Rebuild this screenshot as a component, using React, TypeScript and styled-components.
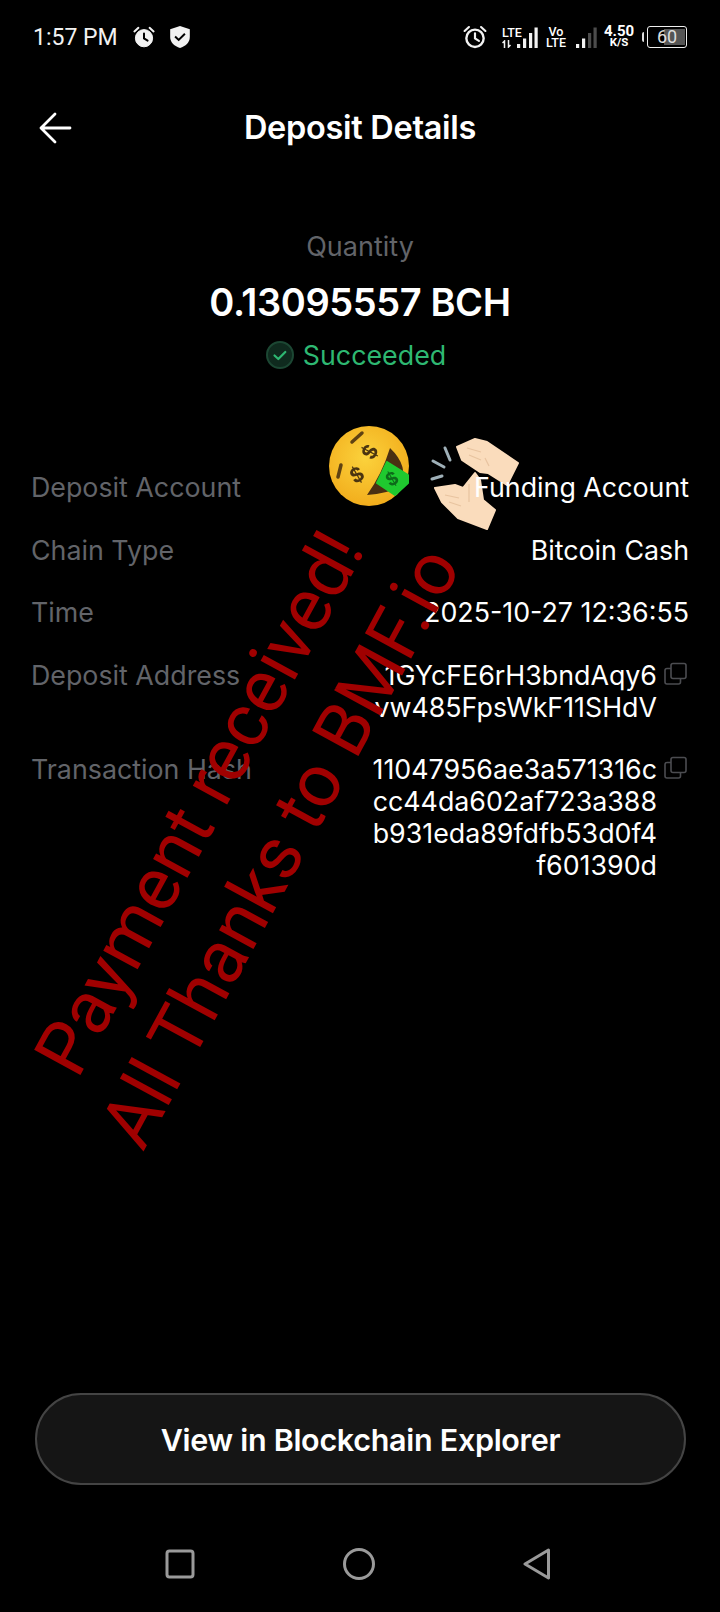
import React, { FC } from 'react'
import styled, { createGlobalStyle } from 'styled-components'

type DetailRow = {
  label: string,
  lines: string[],
  copyable?: boolean
}

const rows: DetailRow[] = [
  { label: 'Deposit Account', lines: ['Funding Account'] },
  { label: 'Chain Type', lines: ['Bitcoin Cash'] },
  { label: 'Time', lines: ['2025-10-27 12:36:55'] },
  { label: 'Deposit Address', lines: ['1GYcFE6rH3bndAqy6', 'vw485FpsWkF11SHdV'], copyable: true },
  { label: 'Transaction Hash', lines: ['11047956ae3a571316c', 'cc44da602af723a388', 'b931eda89fdfb53d0f4', 'f601390d'], copyable: true }
]

const GlobalStyle = createGlobalStyle`
  html, body {
    margin: 0;
    padding: 0;
    background: #000;
  }
`

const Screen = styled.div`
  position: relative;
  display: flex;
  flex-direction: column;
  width: 720px;
  height: 1612px;
  overflow: hidden;
  background: #000;
  color: #fff;
  font-family: Inter, "Liberation Sans", sans-serif;
`

const StatusBar = styled.div`
  display: flex;
  align-items: center;
  justify-content: space-between;
  height: 24px;
  padding: 25px 33px 0 33px;
  font-family: Roboto, sans-serif;
`

const StatusGroup = styled.div`
  display: flex;
  align-items: center;
`

const Clock = styled.span`
  font-size: 23px;
  margin-right: 14px;
  color: #f2f2f2;
`

const ShieldIcon = styled.svg`
  margin-left: 12px;
`

const LteStack = styled.div`
  display: flex;
  flex-direction: column;
  width: 20px;
  margin-left: 14px;
  font-size: 12.5px;
  font-weight: 500;
  line-height: 12px;
`

const VoStack = styled.div`
  display: flex;
  flex-direction: column;
  align-items: center;
  width: 20px;
  margin: 0 10px 0 8px;
  font-size: 12.5px;
  font-weight: 500;
  line-height: 11px;
`

const NetSpeed = styled.div`
  display: flex;
  flex-direction: column;
  align-items: center;
  width: 28px;
  margin: 0 9px 0 8px;
  line-height: 11px;
  font-weight: 700;
`

const SpeedValue = styled.span`
  font-size: 15px;
`

const SpeedUnit = styled.span`
  font-size: 11.5px;
`

const LteArrows = styled.svg`
  margin-top: 1px;
`

const LteBars = styled.svg`
  margin-left: -5px;
`

const Battery = styled.div`
  position: relative;
  box-sizing: border-box;
  width: 40px;
  height: 22px;
  margin-left: 3px;
  border: 1.5px solid #eee;
  border-radius: 3px;
  overflow: hidden;
  text-align: center;
  font-size: 18px;
  line-height: 19px;
  color: #ddd;
`

const BatteryLevel = styled.div`
  position: absolute;
  top: 2px;
  bottom: 2px;
  right: 1px;
  width: 21px;
  background: #555;
`

const BatteryText = styled.span`
  position: relative;
`

const BatteryCap = styled.div`
  width: 2px;
  height: 10px;
  background: #ddd;
  border-radius: 2px 0 0 2px;
`

const Header = styled.header`
  position: relative;
  display: flex;
  align-items: center;
  justify-content: center;
  height: 40px;
  margin-top: 58px;
`

const BackButton = styled.svg`
  position: absolute;
  left: 38px;
  top: 4px;
`

const Title = styled.h1`
  margin: 0;
  font-size: 32.5px;
  font-weight: 600;
  letter-spacing: -0.3px;
`

const Summary = styled.section`
  display: flex;
  flex-direction: column;
  align-items: center;
  margin-top: 85px;
`

const QuantityLabel = styled.div`
  font-size: 27px;
  line-height: 30px;
  color: #626469;
`

const Amount = styled.div`
  margin-top: 18px;
  font-size: 38px;
  line-height: 44px;
  font-weight: 600;
  letter-spacing: -0.4px;
`

const Status = styled.div`
  display: flex;
  align-items: center;
  gap: 9px;
  margin-top: 16px;
  padding-right: 8px;
  font-size: 26.8px;
  line-height: 30px;
  color: #2eb872;
`

const Details = styled.section`
  display: flex;
  flex-direction: column;
  gap: 30.6px;
  margin-top: 101px;
  padding: 0 31px;
`

const Row = styled.div`
  position: relative;
  z-index: 1;
  display: flex;
  justify-content: space-between;
`

const RowLabel = styled.div`
  font-size: 26.8px;
  line-height: 32px;
  color: #626469;
`

const RowValue = styled.div`
  display: flex;
  align-items: flex-start;
  gap: 7px;
`

const ValueLines = styled.div`
  text-align: right;
  font-size: 26.8px;
  line-height: 32px;
  color: #fff;
`

const CopyIcon = styled.svg`
  margin-top: 3px;
  margin-right: 2px;
  flex: none;
`

const Emoji = styled.svg`
  position: absolute;
  z-index: 0;
  filter: blur(0.5px);
`

const MoneyFace = styled(Emoji)`
  left: 327px;
  top: 424px;
`

const ClapHands = styled(Emoji)`
  left: 425px;
  top: 430px;
`

const Watermark = styled.div`
  position: absolute;
  z-index: 2;
  left: 240px;
  top: 825px;
  width: 900px;
  margin-left: -450px;
  margin-top: -92px;
  transform: rotate(-61.5deg);
  text-align: center;
  font-family: Roboto, "Liberation Sans", sans-serif;
  font-weight: 400;
  font-size: 74px;
  line-height: 92px;
  color: #a00000;
  pointer-events: none;
`

const Spacer = styled.div`
  flex: 1;
`

const ExplorerButton = styled.button`
  display: block;
  width: 651px;
  height: 92px;
  margin: 0 0 0 35px;
  background: #151515;
  border: 2px solid #444;
  border-radius: 46px;
  color: #fff;
  font-family: Inter, sans-serif;
  font-size: 30.5px;
  font-weight: 600;
  letter-spacing: -0.3px;
`

const NavBar = styled.nav`
  display: flex;
  align-items: center;
  justify-content: space-between;
  height: 34px;
  padding: 0 169px 0 165px;
  margin: 62px 0 31px;
`

const AlarmGlyph: FC<{ size: number, solid?: boolean }> = ({ size, solid }) => (
  <svg width={size} height={size} viewBox="0 0 24 24" fill="none">
    <circle cx="12" cy="13.2" r={solid ? 8.6 : 8} fill={solid ? '#f2f2f2' : 'none'} stroke="#f2f2f2" strokeWidth={solid ? 1 : 2.2} />
    <path d="M12 8.5V13.4L15.6 15.6" stroke={solid ? '#000' : '#f2f2f2'} strokeWidth="2" strokeLinecap="round" />
    <path d="M2.4 6.4L6.4 2.8M21.600 6.4L17.600 2.8" stroke="#f2f2f2" strokeWidth="2" strokeLinecap="round" />
  </svg>
)

const barPositions = [0, 6, 12, 17.5]

const SignalRects: FC<{ active: number }> = ({ active }) => (
  <>
    {barPositions.map((x, i) => (
      <rect key={x} x={x} y={17 - i * 5.5} width="3.2" height={4 + i * 5.5} fill={i < active ? '#f2f2f2' : '#4c4c4c'} />
    ))}
  </>
)

const CopyGlyph: FC = () => (
  <CopyIcon width="23" height="23" viewBox="0 0 23 23" fill="none" stroke="#4b4c50" strokeWidth="1.6">
    <rect x="7" y="1.5" width="15" height="15" rx="2" />
    <path d="M7 6.500H3a2 2 0 0 0-2 2V20a2 2 0 0 0 2 2h11.500a2 2 0 0 0 2-2v-3.500" />
  </CopyIcon>
)

const App: FC = () => {
  return (
    <Screen>
      <GlobalStyle />
      <StatusBar>
        <StatusGroup>
          <Clock>1:57 PM</Clock>
          <AlarmGlyph size={24} solid />
          <ShieldIcon width="24" height="24" viewBox="0 0 22 22">
            <path d="M11 1l9 3v7c0 5-4 8.500-9 10-5-1.500-9-5-9-10V4z" fill="#f2f2f2" />
            <path d="M6.500 10.500l3.300 3.200 5.700-5.700" fill="none" stroke="#000" strokeWidth="1.800" />
          </ShieldIcon>
        </StatusGroup>
        <StatusGroup>
          <AlarmGlyph size={26} />
          <LteStack>
            <span>LTE</span>
            <LteArrows width="10" height="8" viewBox="0 0 10 8" fill="none" stroke="#f2f2f2" strokeWidth="1.5">
              <path d="M2.500 8V1L0.500 3M6.500 0V7L8.500 5" />
            </LteArrows>
          </LteStack>
          <LteBars width="21" height="21" viewBox="0 0 21 21">
            <SignalRects active={4} />
          </LteBars>
          <VoStack>
            <span>Vo</span>
            <span>LTE</span>
          </VoStack>
          <svg width="21" height="21" viewBox="0 0 21 21">
            <SignalRects active={2} />
          </svg>
          <NetSpeed>
            <SpeedValue>4.50</SpeedValue>
            <SpeedUnit>K/S</SpeedUnit>
          </NetSpeed>
          <BatteryCap />
          <Battery>
            <BatteryLevel />
            <BatteryText>60</BatteryText>
          </Battery>
        </StatusGroup>
      </StatusBar>

      <Header>
        <BackButton width="34" height="34" viewBox="0 0 34 34" fill="none" stroke="#fff" strokeWidth="2.800" strokeLinecap="round" strokeLinejoin="round">
          <path d="M3 17H32M17 3L3 17l14 14" />
        </BackButton>
        <Title>Deposit Details</Title>
      </Header>

      <Summary>
        <QuantityLabel>Quantity</QuantityLabel>
        <Amount>0.13095557 BCH</Amount>
        <Status>
          <svg width="28" height="28" viewBox="0 0 28 28" fill="none">
            <circle cx="14" cy="14" r="13" fill="#0f2a1e" stroke="#1c4733" strokeWidth="2" />
            <path d="M8.500 14.500l3.800 3.500 7-7" stroke="#2eb872" strokeWidth="2.200" strokeLinecap="round" strokeLinejoin="round" />
          </svg>
          Succeeded
        </Status>
      </Summary>

      <Details>
        {rows.map(row => (
          <Row key={row.label}>
            <RowLabel>{row.label}</RowLabel>
            <RowValue>
              <ValueLines>
                {row.lines.map(line => <div key={line}>{line}</div>)}
              </ValueLines>
              {row.copyable && <CopyGlyph />}
            </RowValue>
          </Row>
        ))}
      </Details>

      <MoneyFace width="84" height="84" viewBox="0 0 84 84">
        <defs>
          <radialGradient id="faceFill" cx="45%" cy="40%" r="60%">
            <stop offset="0%" stopColor="#fbd23c" />
            <stop offset="100%" stopColor="#f2ad1c" />
          </radialGradient>
        </defs>
        <circle cx="42" cy="42" r="40" fill="url(#faceFill)" />
        <path d="M63 24Q82 42 74 62Q60 70 40 71Q55 50 63 24Z" fill="#4a2f12" />
        <path d="M25 18L35 9" fill="none" stroke="#5f4212" strokeWidth="3.500" strokeLinecap="round" />
        <path d="M11 53L14 41" fill="none" stroke="#5f4212" strokeWidth="3.500" strokeLinecap="round" />
        <text x="43" y="35" fontSize="20" fontWeight="700" fill="#4a3410" textAnchor="middle" transform="rotate(-62 43 28)">$</text>
        <text x="30" y="58" fontSize="20" fontWeight="700" fill="#4a3410" textAnchor="middle" transform="rotate(-30 30 51)">$</text>
        <path d="M60 38L81 51L81 59L68 71L50 59Z" fill="#1fc92f" stroke="#1fc92f" strokeWidth="2" strokeLinejoin="round" />
        <text x="65" y="61" fontSize="18" fontWeight="700" fill="#0d6a1a" textAnchor="middle" transform="rotate(-30 65 55)">$</text>
      </MoneyFace>

      <ClapHands width="100" height="110" viewBox="0 0 100 110">
        <path d="M32 17L50 9L62 12L93 33L82 55L63 43L55 42L37 30Z" fill="#fadcbc" stroke="#fadcbc" strokeWidth="2" strokeLinejoin="round" />
        <path d="M42 18L56 22M44 25L56 30M60 28L64 36" fill="none" stroke="#e8c4a0" strokeWidth="1.200" />
        <path d="M10 58L30 55L38 58L50 43L55 50L58 70L70 80L62 99L33 88L17 72Z" fill="#fadcbc" stroke="#fadcbc" strokeWidth="2" strokeLinejoin="round" />
        <path d="M20 65L34 68M24 72L36 76M44 54L44 72" fill="none" stroke="#e8c4a0" strokeWidth="1.200" />
        <path d="M20 18L25 30M8 31L19 37M7 49L17 46" fill="none" stroke="#9fb0b8" strokeWidth="3" strokeLinecap="round" />
      </ClapHands>

      <Watermark>
        <div>Payment received!</div>
        <div>All Thanks to BMF.io</div>
      </Watermark>

      <Spacer />

      <ExplorerButton>View in Blockchain Explorer</ExplorerButton>

      <NavBar>
        <svg width="30" height="30" viewBox="0 0 30 30" fill="none" stroke="#9a9a9a" strokeWidth="3">
          <rect x="2" y="2" width="26" height="26" rx="2.500" />
        </svg>
        <svg width="32" height="32" viewBox="0 0 32 32" fill="none" stroke="#9a9a9a" strokeWidth="3">
          <circle cx="16" cy="16" r="14.500" />
        </svg>
        <svg width="28" height="32" viewBox="0 0 28 32" fill="none" stroke="#9a9a9a" strokeWidth="3" strokeLinejoin="round">
          <path d="M25.500 2L2 16l23.500 14z" />
        </svg>
      </NavBar>
    </Screen>
  )
}

export default App
